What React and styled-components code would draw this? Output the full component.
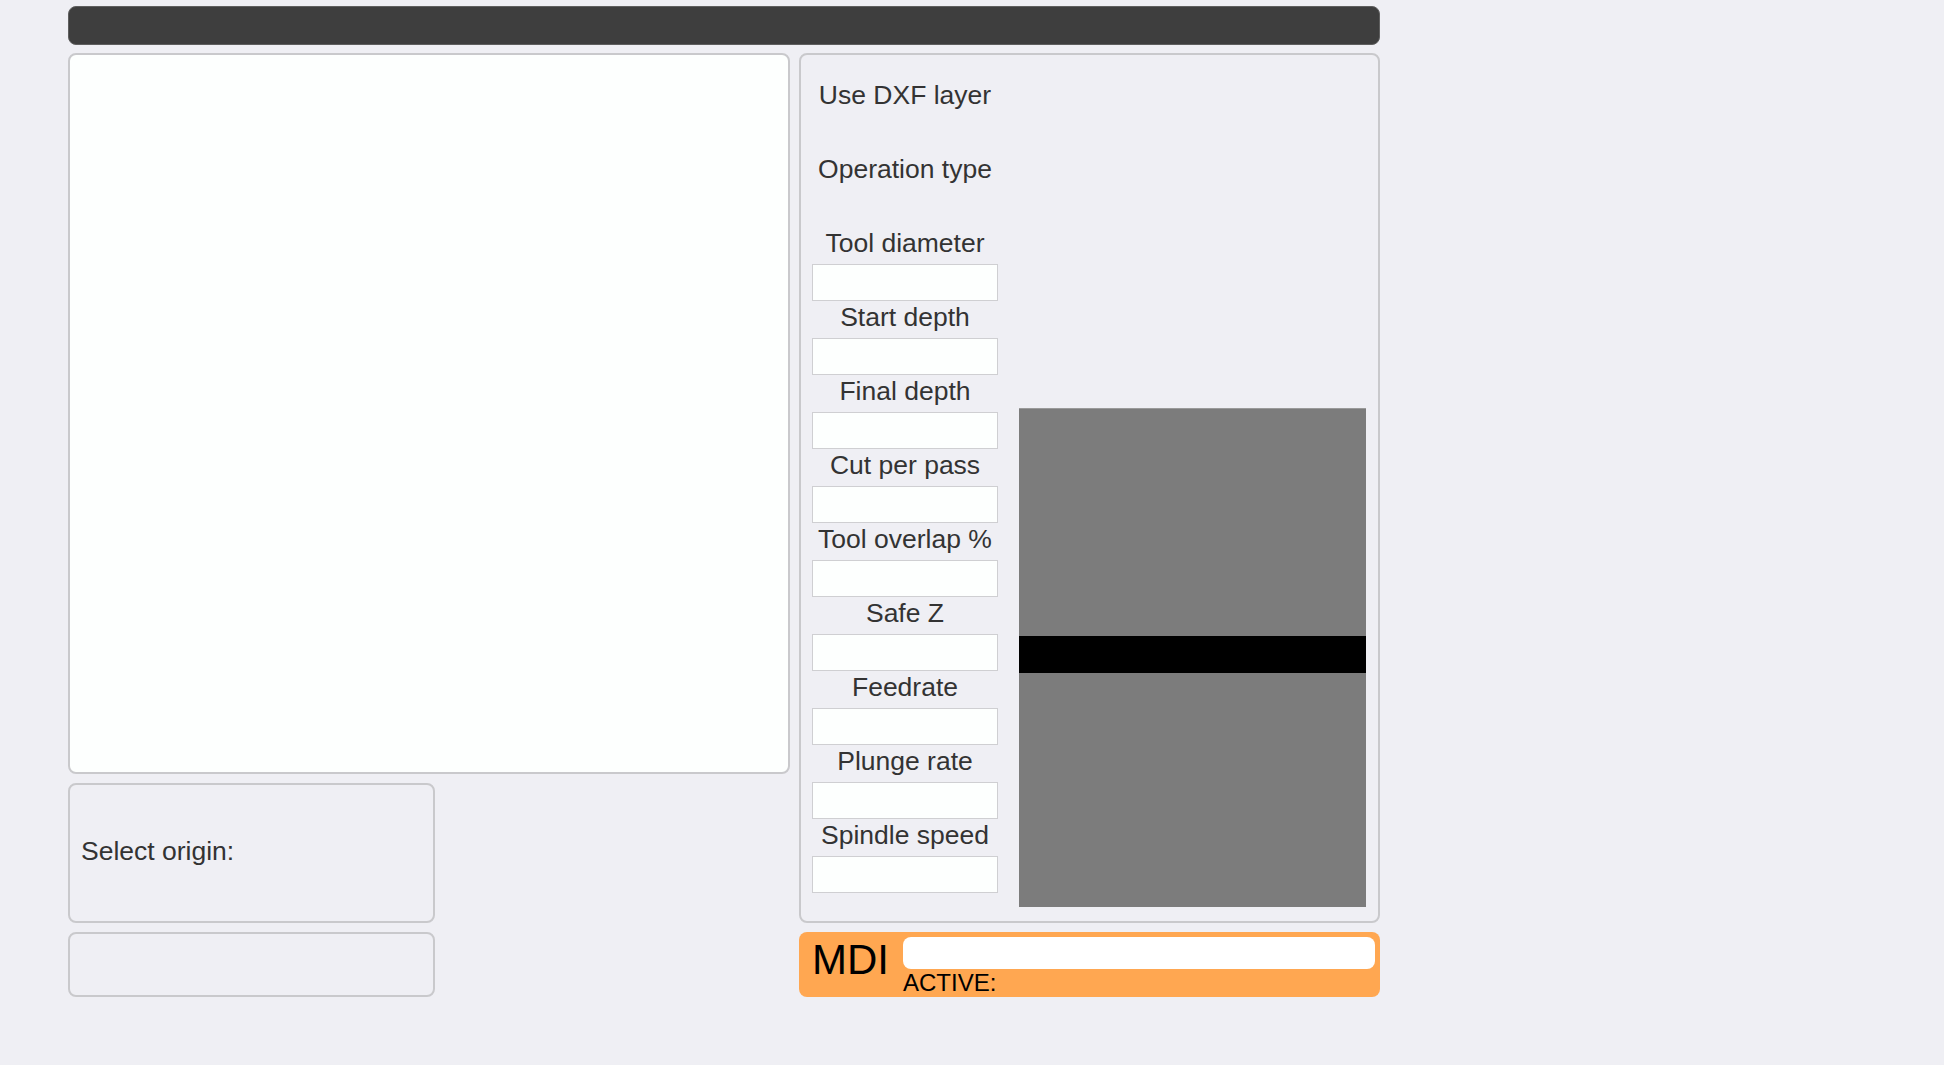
import React from 'react';
import styled, { createGlobalStyle } from 'styled-components';

const GlobalStyle = createGlobalStyle`
    html, body {
        margin: 0;
        padding: 0;
        background: #efeff4;
    }
    body {
        font-family: "Liberation Sans", Arial, Helvetica, sans-serif;
        color: #333;
    }
`;

const Page = styled.div`
    width: 1312px;
    padding: 6px 0 0 68px;
`;

const TopBar = styled.div`
    height: 39px;
    box-sizing: border-box;
    background: #3e3e3e;
    border: 1px solid #5f5f5f;
    border-radius: 8px;
`;

const Main = styled.div`
    display: flex;
    gap: 9px;
    margin-top: 8px;
`;

const Column = styled.div`
    display: flex;
    flex-direction: column;
    gap: 9px;
    width: ${(props) => props.width}px;
`;

const Box = styled.div`
    box-sizing: border-box;
    height: ${(props) => props.height}px;
    background: ${(props) => (props.white ? '#fdfffe' : 'transparent')};
    border: 2px solid #c9c9cc;
    border-radius: 8px;
`;

const OriginBox = styled(Box)`
    display: flex;
    align-items: center;
    padding: 0 0 4px 11px;
    font-size: 26.5px;
`;

const SettingsPanel = styled.div`
    box-sizing: border-box;
    height: 870px;
    display: flex;
    align-items: flex-end;
    gap: 21px;
    padding: 24px 12px 14px 11px;
    border: 2px solid #c9c9cc;
    border-radius: 8px;
`;

const Fields = styled.div`
    width: 186px;
    padding-bottom: 14px;
    display: flex;
    flex-direction: column;
`;

const Label = styled.div`
    height: 37px;
    line-height: 33px;
    font-size: 26.5px;
    text-align: center;
    white-space: nowrap;
`;

const Blank = styled.div`
    height: 37px;
`;

const Input = styled.input`
    display: block;
    box-sizing: border-box;
    width: 186px;
    height: 37px;
    margin: 0;
    padding: 0 6px;
    background: #fdfffe;
    border: 1px solid #cfcfd2;
    border-radius: 0;
    font-size: 18px;
    outline: none;
`;

const Preview = styled.div`
    box-sizing: border-box;
    width: 347px;
    height: 499px;
    background: #7c7c7c;
    border-top: 1px solid #9a9a9a;
`;

const Band = styled.div`
    height: 37px;
    margin-top: 227px;
    background: #000;
`;

const Mdi = styled.div`
    box-sizing: border-box;
    height: 65px;
    display: flex;
    align-items: flex-start;
    padding: 5px 5px 0 13px;
    background: #ffa751;
    border-radius: 8px;
    color: #000;
`;

const MdiTitle = styled.div`
    width: 91px;
    margin-top: 2px;
    font-size: 42px;
    line-height: 42px;
`;

const MdiBody = styled.div`
    flex: 1;
    display: flex;
    flex-direction: column;
`;

const MdiInput = styled.input`
    box-sizing: border-box;
    width: 100%;
    height: 32px;
    margin: 0;
    background: #fff;
    border: none;
    border-radius: 8px;
    outline: none;
`;

const Active = styled.div`
    position: relative;
    margin-top: 2px;
    font-size: 24px;
    line-height: 24px;
    &::after {
        content: '';
        position: absolute;
        left: 46px;
        bottom: -6px;
        width: 20px;
        height: 6px;
        border-radius: 0 0 10px 10px;
        background: #ffa751;
    }
`;

const fields = [
    { label: 'Use DXF layer' },
    { label: 'Operation type' },
    { label: 'Tool diameter', input: true },
    { label: 'Start depth', input: true },
    { label: 'Final depth', input: true },
    { label: 'Cut per pass', input: true },
    { label: 'Tool overlap %', input: true },
    { label: 'Safe Z', input: true },
    { label: 'Feedrate', input: true },
    { label: 'Plunge rate', input: true },
    { label: 'Spindle speed', input: true },
];

const App = () => {
    return (
        <>
            <GlobalStyle />
            <Page>
                <TopBar />
                <Main>
                    <Column width={722}>
                        <Box white height={721} />
                        <Column width={367}>
                            <OriginBox height={140}>Select origin:</OriginBox>
                            <Box height={65} />
                        </Column>
                    </Column>
                    <Column width={581}>
                        <SettingsPanel>
                            <Fields>
                                {fields.map((f) => (
                                    <React.Fragment key={f.label}>
                                        <Label>{f.label}</Label>
                                        {f.input ? <Input type="text" /> : <Blank />}
                                    </React.Fragment>
                                ))}
                            </Fields>
                            <Preview>
                                <Band />
                            </Preview>
                        </SettingsPanel>
                        <Mdi>
                            <MdiTitle>MDI</MdiTitle>
                            <MdiBody>
                                <MdiInput type="text" />
                                <Active>ACTIVE:</Active>
                            </MdiBody>
                        </Mdi>
                    </Column>
                </Main>
            </Page>
        </>
    );
};

export default App;
